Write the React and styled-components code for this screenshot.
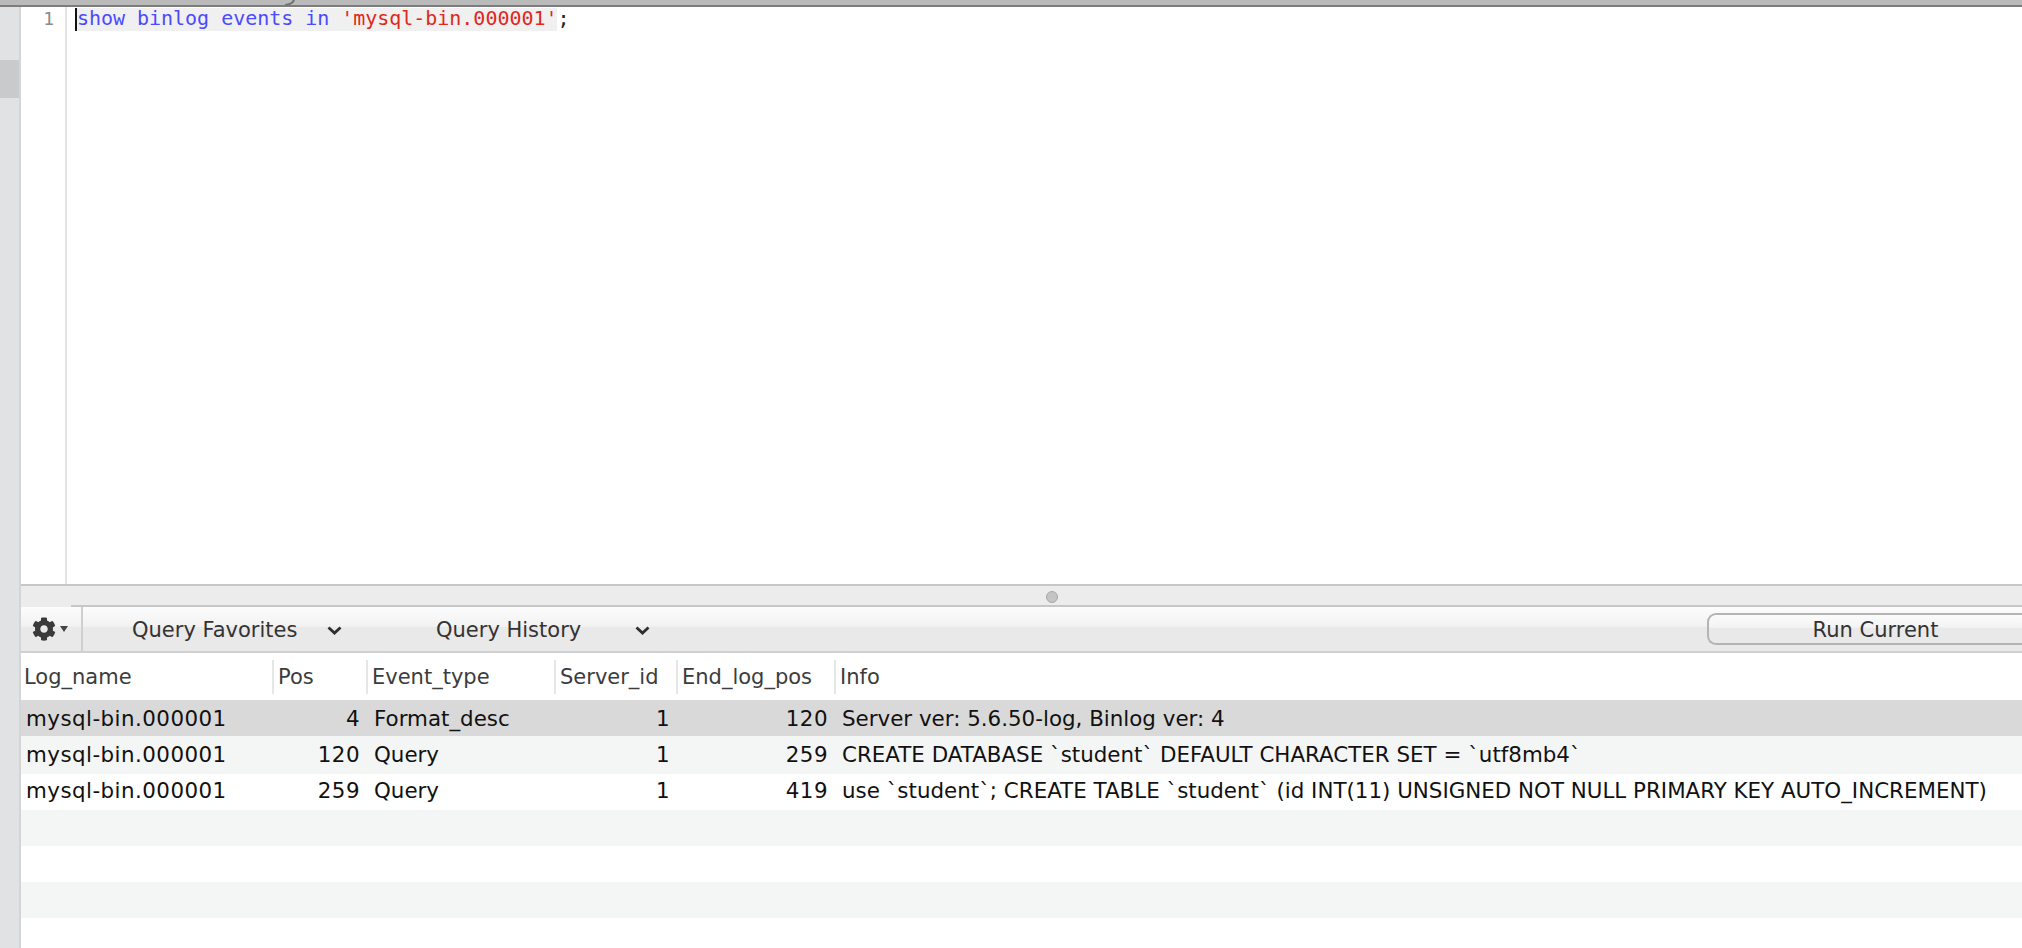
import React from "react";
import styled, { createGlobalStyle } from "styled-components";
import { FaCog } from "react-icons/fa";

const GlobalStyle = createGlobalStyle`
  html, body {
    margin: 0;
    padding: 0;
    background: #fff;
    overflow: hidden;
  }
`;

const uiFont = `"DejaVu Sans", "Liberation Sans", sans-serif`;

const Page = styled.div`
  width: 2022px;
  height: 948px;
  display: flex;
  flex-direction: column;
  overflow: hidden;
  background: #fff;
`;

const TopEdge = styled.div`
  height: 7px;
  flex: none;
  padding-left: 283px;
  background: #bababa;
  border-bottom: 2px solid #7d7d7d;
  box-sizing: border-box;
`;

const EdgeCurl = styled.svg`
  display: block;
  width: 14px;
  height: 5px;
`;

const Body = styled.div`
  flex: 1;
  display: flex;
  min-height: 0;
`;

const SideRail = styled.div`
  width: 21px;
  flex: none;
  padding-top: 53px;
  background: #e1e2e4;
  border-right: 2px solid #d4d5d7;
  box-sizing: border-box;
`;

const RailThumb = styled.div`
  height: 38px;
  background: #c9cacc;
`;

const Main = styled.div`
  flex: 1;
  min-width: 0;
  display: flex;
  flex-direction: column;
`;

const Editor = styled.div`
  height: 577px;
  flex: none;
  display: flex;
`;

const Gutter = styled.div`
  width: 46px;
  flex: none;
  box-sizing: border-box;
  padding: 0 11px 0 0;
  border-right: 2px solid #e4e4e4;
  text-align: right;
  font: 18px/24px "DejaVu Sans Mono", monospace;
  color: #8a8a8a;
`;

const CodeLine = styled.div`
  height: 23px;
  margin: 1px 0 0 9px;
  font: 20px/20px "DejaVu Sans Mono", monospace;
  letter-spacing: -0.03px;
  white-space: pre;
  color: #222;
`;

const Selection = styled.span`
  display: inline-block;
  padding-bottom: 3px;
  background: #f0f0f0;
  border-left: 2px solid #111;
  margin-left: -1px;
`;

const Keyword = styled.span`
  color: #4a4aff;
`;

const Str = styled.span`
  color: #e0281c;
`;

const Divider = styled.div`
  position: relative;
  height: 23px;
  flex: none;
  box-sizing: border-box;
  display: flex;
  align-items: center;
  justify-content: center;
  padding-left: 60px;
  background: #ececec;
  border-top: 2px solid #c6c6c6;

  &::after {
    content: "";
    position: absolute;
    left: 50px;
    right: 0;
    bottom: 0;
    height: 2px;
    background: #c6c6c6;
  }
`;

const Grip = styled.div`
  width: 12px;
  height: 12px;
  border-radius: 50%;
  background: #c4c4c4;
  border: 1px solid #a8a8a8;
  box-sizing: border-box;
`;

const Toolbar = styled.div`
  height: 46px;
  flex: none;
  box-sizing: border-box;
  display: flex;
  align-items: center;
  border-bottom: 2px solid #d0d0d0;
  background: linear-gradient(#fcfcfc 0%, #f2f2f2 44%, #e9e9e9 46%, #e9e9e9 100%);
  font: 21px ${uiFont};
  color: #333;
`;

const GearButton = styled.div`
  width: 62px;
  height: 100%;
  flex: none;
  box-sizing: border-box;
  display: flex;
  align-items: center;
  padding-left: 11px;
  gap: 4px;
  border-right: 2px solid #cfcfcf;
  color: #3a3a3a;
`;

const Caret = styled.span`
  width: 0;
  height: 0;
  border-left: 4px solid transparent;
  border-right: 4px solid transparent;
  border-top: 6px solid #444;
`;

const Menu = styled.div`
  width: ${(p) => p.$width}px;
  flex: none;
  display: flex;
  align-items: center;
  padding: 2px 0 0 ${(p) => p.$pad}px;
  box-sizing: border-box;
`;

const MenuLabel = styled.span`
  width: ${(p) => p.$width}px;
  flex: none;
  white-space: nowrap;
`;

const Chevron = styled.svg`
  width: 15px;
  height: 9px;
  flex: none;
`;

const RunButton = styled.div`
  margin-left: auto;
  width: 340px;
  height: 32px;
  flex: none;
  box-sizing: border-box;
  margin-right: -25px;
  display: flex;
  align-items: center;
  justify-content: center;
  padding: 2px 5px 0 0;
  border: 2px solid #b4b4b4;
  border-right: none;
  border-radius: 9px 0 0 9px;
  background: linear-gradient(#fbfbfb 0%, #f3f3f3 44%, #e9e9e9 46%, #e9e9e9 100%);
  color: #333;
`;

const Columns = styled.div`
  display: grid;
  grid-template-columns: 253px 94px 188px 122px 158px 1fr;
`;

const HeaderRow = styled(Columns)`
  height: 47px;
  flex: none;
  align-items: center;
  background: #fff;
  font: 21px ${uiFont};
  color: #3c3c3c;
`;

const HeaderCell = styled.div`
  height: 34px;
  line-height: 34px;
  padding-left: 4px;
  white-space: nowrap;
  border-right: 2px solid #e6e6e6;
  box-sizing: border-box;

  &:first-child {
    padding-left: 3px;
  }

  &:last-child {
    border-right: none;
  }
`;

const Row = styled(Columns)`
  height: ${(p) => p.$height || 36}px;
  flex: none;
  box-sizing: border-box;
  padding-bottom: ${(p) => p.$lift || 0}px;
  align-items: center;
  background: ${(p) => (p.$selected ? "#d9d9d9" : p.$odd ? "#f4f5f5" : "#fff")};
  font: 21.4px ${uiFont};
  color: #111;
`;

const Cell = styled.div`
  white-space: nowrap;
  padding: 0 ${(p) => (p.$right ? 8 : 0)}px 0 ${(p) => (p.$right ? 0 : 6)}px;
  text-align: ${(p) => (p.$right ? "right" : "left")};
  letter-spacing: ${(p) => (p.$numeric ? 0.45 : 0)}px;

  &:first-child {
    padding-left: 5px;
  }
`;

const events = [
  ["mysql-bin.000001", "4", "Format_desc", "1", "120", "Server ver: 5.6.50-log, Binlog ver: 4"],
  ["mysql-bin.000001", "120", "Query", "1", "259", "CREATE DATABASE `student` DEFAULT CHARACTER SET = `utf8mb4`"],
  ["mysql-bin.000001", "259", "Query", "1", "419", "use `student`; CREATE TABLE `student` (id INT(11) UNSIGNED NOT NULL PRIMARY KEY AUTO_INCREMENT)"],
];

const heads = ["Log_name", "Pos", "Event_type", "Server_id", "End_log_pos", "Info"];

const ChevronIcon = () => (
  <Chevron viewBox="0 0 15 9">
    <path d="M1.5 1.5 L7.5 7 L13.5 1.5" fill="none" stroke="#2e2e2e" strokeWidth="2.8" />
  </Chevron>
);

function EventRow({ values, selected, odd, height, lift }) {
  return (
    <Row $selected={selected} $odd={odd} $height={height} $lift={lift}>
      {values &&
        values.map((v, i) => {
          const right = i === 1 || i === 3 || i === 4;
          return (
            <Cell key={i} $right={right} $numeric={right || i === 0}>
              {v}
            </Cell>
          );
        })}
    </Row>
  );
}

export default function App() {
  return (
    <Page>
      <GlobalStyle />
      <TopEdge>
        <EdgeCurl viewBox="0 0 14 5">
          <path d="M11 0 C10 3 7 4.5 2 5" fill="none" stroke="#6f6f6f" strokeWidth="2" />
        </EdgeCurl>
      </TopEdge>
      <Body>
        <SideRail>
          <RailThumb />
        </SideRail>
        <Main>
          <Editor>
            <Gutter>1</Gutter>
            <CodeLine>
              <Selection>
                <Keyword>show binlog events in </Keyword>
                <Str>'mysql-bin.000001'</Str>
              </Selection>
              ;
            </CodeLine>
          </Editor>
          <Divider>
            <Grip />
          </Divider>
          <Toolbar>
            <GearButton>
              <FaCog size={24} />
              <Caret />
            </GearButton>
            <Menu $width={353} $pad={49}>
              <MenuLabel $width={195}>Query Favorites</MenuLabel>
              <ChevronIcon />
            </Menu>
            <Menu $width={300} $pad={0}>
              <MenuLabel $width={199}>Query History</MenuLabel>
              <ChevronIcon />
            </Menu>
            <RunButton>Run Current</RunButton>
          </Toolbar>
          <HeaderRow>
            {heads.map((h) => (
              <HeaderCell key={h}>{h}</HeaderCell>
            ))}
          </HeaderRow>
          <EventRow values={events[0]} selected />
          <EventRow values={events[1]} odd height={38} lift={2} />
          <EventRow values={events[2]} lift={4} />
          <EventRow odd />
          <EventRow />
          <EventRow odd />
          <EventRow />
        </Main>
      </Body>
    </Page>
  );
}
